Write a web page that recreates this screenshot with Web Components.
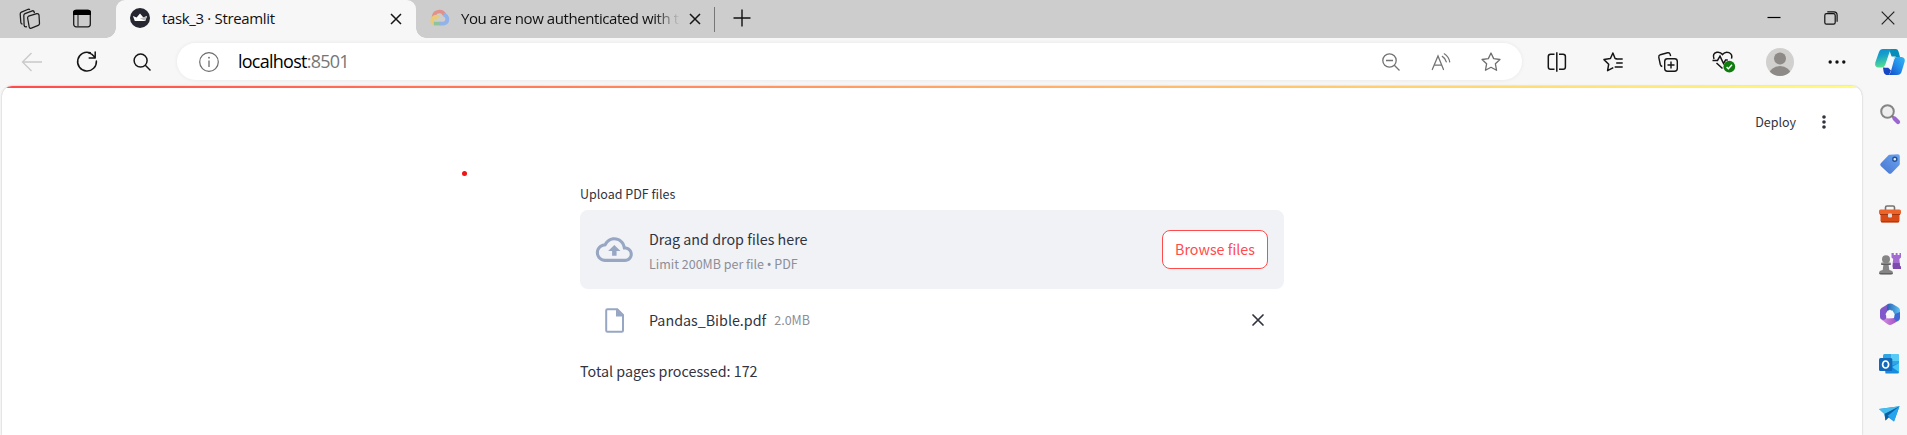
<!DOCTYPE html>
<html lang="en"><head><meta charset="utf-8"><title>task_3 · Streamlit</title>
<style>html,body{margin:0;height:100%;overflow:hidden;background:#f7f7f7}</style></head><body>
<browser-window></browser-window>
<script>
const icons = {
 spaces:[22,22,'<g fill="none" stroke="#1b1b1b" stroke-width="1.25" stroke-linejoin="round"><path d="M9.5 8.2l8.3-2.6q1.8-.3 2.2 1.4l.5 8.5q0 1.4-1.3 1.9l-6.8 2.8q-1.8.5-2.2-1.3L8.600 10q-.1-1.300.9-1.800z"/><path d="M8 18.600l-1.200.3q-1.500 0-1.700-1.500L4.800 7.500q0-1.300 1.200-1.800l7.300-2.900q1.500-.3 1.900 1.200l.2 1.200"/><path d="M3.500 16.300l-1-.6q-.7-.6-.7-1.500L1.200 6q0-1.300 1.200-1.800L9.200 1.300q1.100-.3 1.600.6"/></g>'],
 tabs:[20,20,'<rect x="1.700" y="1.500" width="16.600" height="16.300" rx="2.500" fill="none" stroke="#1b1b1b" stroke-width="1.300"/><path d="M1 6V3.500Q1 .8 3.800.8h12.400Q19 .8 19 3.500V6z" fill="#000"/><path d="M6 6v11.500" stroke="#333" stroke-width="1.200"/>'],
 crown:[20,20,'<circle cx="10" cy="10" r="10" fill="#262730"/><path d="M2.900 8.100l3.700 1.300L10 5.400l3.400 4 3.700-1.300-1.900 5H4.800z" fill="#fff"/><path d="M10 10.600l7.100-2.500-1.900 4.600z" fill="#bbb"/>'],
 cloud:[20,18,'<g fill="none" stroke-width="3.700"><path d="M3.500 8.500Q4 2.800 9.300 2.500q4-.1 5.300 3.600" stroke="#df918a"/><path d="M8.500 8.500q-3-1.700-5.300.5-2.200 3 .4 5.500" stroke="#e9cb78"/><path d="M3.800 14.600h6.600" stroke="#8fc49b"/><path d="M13.800 5.500q3.200 1.100 3.600 4.600 0 4-4 4.500h-3.700" stroke="#91b3ea"/></g>'],
 close:[12,12,'<path d="M1 1l10 10M11 1L1 11" stroke="#151515" stroke-width="1.500"/>'],
 plus:[18,18,'<path d="M9 .5v17M.5 9h17" stroke="#111" stroke-width="1.400"/>'],
 min:[14,14,'<path d="M.5 6.500h13" stroke="#000" stroke-width="1.200"/>'],
 max:[14,14,'<g fill="none" stroke="#111" stroke-width="1.200"><rect x=".8" y="2.700" width="10.400" height="10.400" rx="1.700"/><path d="M3.300.9h6.600q3.200 0 3.200 3.200v6.700"/></g>'],
 wclose:[14,14,'<path d="M.7.700l12.600 12.600M13.300.700L.7 13.300" stroke="#222" stroke-width="1.200"/>'],
 back:[22,20,'<path d="M21 10H1.500M10.500 1L1.500 10l9 9" fill="none" stroke="#c9c9c9" stroke-width="1.300"/>'],
 reload:[22,22,'<path d="M14.300 1.800A9.400 9.400 0 1 0 20.400 10M19.200 1v6h-6M19 6.800Q16.500 2.600 12 1.700" fill="none" stroke="#151515" stroke-width="1.500" stroke-linecap="round" stroke-linejoin="round"/>'],
 search:[18,18,'<circle cx="7.600" cy="7.600" r="6.500" fill="none" stroke="#151515" stroke-width="1.500"/><path d="M12.300 12.300l5.200 5.200" stroke="#151515" stroke-width="1.500"/>'],
 info:[20,20,'<circle cx="10" cy="10" r="9.300" fill="none" stroke="#6c6c6c" stroke-width="1.200"/><path d="M10 8.500V15" stroke="#6c6c6c" stroke-width="1.300"/><circle cx="10" cy="5.700" r=".9" fill="#6c6c6c"/>'],
 zoomout:[18,18,'<g fill="none" stroke="#737373" stroke-width="1.300"><circle cx="7.500" cy="7.500" r="6.700"/><path d="M12.300 12.300l5.200 5.200M4 7.500h7"/></g>'],
 read:[20,18,'<g fill="none" stroke="#737373" stroke-width="1.250" stroke-linecap="round"><path d="M1.300 16.500L7 3l5.500 13.500M3.200 12h7.600M11.300 3.400q3.200 2 4 5.500M13.300.8q4.500 2.900 5.400 8"/></g>'],
 star:[20,20,'<path d="M10 1l2.650 5.650 6.300.85-4.550 4.300 1.150 6.500L10 15.300l-5.550 3 1.150-6.500L1.050 7.500l6.300-.85z" fill="none" stroke="#6e6e6e" stroke-width="1.300" stroke-linejoin="round"/>'],
 split:[20,20,'<g fill="none" stroke="#151515" stroke-width="1.500"><path d="M7.500 2.300H3.600q-2.300 0-2.300 2.300v10.300q0 2.300 2.300 2.300h3.900M12 2.300h4.100q2.300 0 2.300 2.300v10.300q0 2.300-2.300 2.300H12M9.800.2v19.600"/></g>'],
 favs:[20,20,'<path d="M14 6.700l-1.900-.2L9.900 1 7.400 6.500 1 7.600l4.700 4.600-1.100 6.500 5.700-3M12.400 7h7.300M13.200 11h6.500M11.700 15h8" fill="none" stroke="#151515" stroke-width="1.500" stroke-linejoin="round"/>'],
 collections:[20,20,'<g fill="none" stroke="#151515" stroke-width="1.400"><rect x="6.700" y="6.700" width="12.600" height="12.600" rx="2.700"/><path d="M13 9.500v7M9.500 13h7M4.300 14.500q-1.500-.3-2-2L.8 5.300q-.3-2 1.500-2.600L9.600.8q2-.4 2.600 1.600l.4 1.800"/></g>'],
 heart:[24,22,'<path d="M2 8Q0 2.500 4.800 1.300q3.600-.7 5.700 2.200 2.700-3.400 6.500-1.900 3.800 1.700 2.500 6M.5 9.500h5l2.500-4.300 3.500 7.300 2.100-3.500h2.200M4.500 12l6 5.500" fill="none" stroke="#151515" stroke-width="1.500"/><circle cx="17.300" cy="15.700" r="5.900" fill="#107c10"/><path d="M14.600 15.900l1.800 1.800 3.600-3.900" fill="none" stroke="#fff" stroke-width="1.400"/>'],
 avatar:[28,28,'<defs><clipPath id="a"><circle cx="14" cy="14" r="14"/></clipPath></defs><g clip-path="url(#a)"><path d="M0 0h28v28H0z" fill="#d2d0ce"/><circle cx="14" cy="10.500" r="6" fill="#8d8a87"/><ellipse cx="14" cy="27.500" rx="11" ry="9.500" fill="#8d8a87"/></g>'],
 dots:[18,4,'<g fill="#111"><circle cx="2.200" cy="2" r="1.700"/><circle cx="9" cy="2" r="1.700"/><circle cx="15.800" cy="2" r="1.700"/></g>'],
 copilot:[30,28,'<defs><linearGradient id="a" x2=".2" y2="1"><stop stop-color="#1389ce"/><stop offset=".4" stop-color="#16a0cc"/><stop offset="1" stop-color="#55dc91"/></linearGradient><linearGradient id="b" x1="1" x2="0" y2="1"><stop stop-color="#31b8f5"/><stop offset=".5" stop-color="#208be8"/><stop offset="1" stop-color="#1648c8"/></linearGradient></defs><path d="M14 1h7q2 .2 2.700 3l1.300 5h-3q-3 0-4 2.500L16 7z" fill="#078dba"/><path d="M8 19.500h5l3 3-2 4.500h-2.500Q9 26.500 8.500 23z" fill="#1747c4"/><path d="M8 1h8.500q-1.500 1-2.300 4l-3.700 11q-1.200 3.500-4 3.500H3Q-.5 19 .3 14.500L4 4Q5 1 8 1z" fill="url(#a)"/><path d="M22 9h4.500q4 .5 3.200 4.500L26.500 24q-1 3-4.500 3h-8.500q1.700-1 2.500-4l3-11q1-3 3-3z" fill="url(#b)"/><path d="M17 8.500h4q-2 .8-2.700 3.200l-2 5.500q-1 2.300-3.300 2.300H9.200q1.500-.8 2.200-3l1.800-5.500q.8-2.500 3.800-2.500z" fill="#f4fafd"/>'],
 kebab:[4,14,'<g fill="#31333f"><circle cx="2" cy="2" r="1.800"/><circle cx="2" cy="7" r="1.800"/><circle cx="2" cy="12" r="1.800"/></g>'],
 ssearch:[20,20,'<circle cx="7.500" cy="7.500" r="6.300" fill="#eee" stroke="#858585" stroke-width="2"/><path d="M11.800 11.800l2.200 2.200" stroke="#777" stroke-width="2"/><path d="M14.500 14.500l3.500 3.500" stroke="#9b65d2" stroke-width="4.200" stroke-linecap="round"/>'],
 tag:[20,20,'<defs><linearGradient id="a" x1="1" x2="0" y2="1"><stop stop-color="#69a4f1"/><stop offset="1" stop-color="#4875d0"/></linearGradient></defs><path d="M9.600.7L17.800.2q2 0 2 2v7.500q0 1-.8 1.800l-7.500 7.700q-1.500 1.300-3 0L.8 12q-1.300-1.400 0-2.800L8 1.700q.7-.8 1.600-1z" fill="url(#a)"/><circle cx="14.800" cy="5.200" r="2" fill="#e8f1ff" stroke="#234f93" stroke-width="1.400"/>'],
 tools:[22,18,'<path d="M6.500 5V2.500q0-1.500 1.500-1.500h6q1.500 0 1.500 1.500V5" fill="none" stroke="#77716e" stroke-width="1.600"/><path d="M1.500 8h19v7.500q0 2-2 2h-15q-2 0-2-2z" fill="#d84b16"/><rect y="4.500" width="22" height="5" rx="1.500" fill="#ed642b"/><path d="M1 9.500h20M2 16.800h18" stroke="#a73610" stroke-width="1"/><rect x="9" y="8.500" width="4" height="4" rx="1" fill="#ddd"/>'],
 chess:[22,22,'<path d="M12.500 0h2.300v2h1.900V0h1.900v2h1.900V0h1.500v4.500l-1.600 1.500.5 6.500 1.100 1.500v2h-8l-.7-3 .9-7-1.700-1.500z" fill="#a36bd2"/><path d="M14 10h6.700l.2 2.500 1.100 1.500v2h-8z" fill="#7c4aad"/><g fill="#858585"><circle cx="7" cy="6.300" r="4"/><rect x="2" y="9.500" width="10" height="2.500" rx="1"/><path d="M4.500 11h5l.8 6q3.700.5 3.700 3 0 1.800-2 1.800H2Q0 21.800 0 20q0-2.500 3.700-3z"/></g><path d="M2.500 11.500h9M.5 20.500h13" stroke="#606060" stroke-width="1.100"/>'],
 m365:[20,22,'<defs><linearGradient id="a" x2="1"><stop stop-color="#244da9"/><stop offset="1" stop-color="#5bc5f4"/></linearGradient><linearGradient id="b" x1="1" x2="0"><stop stop-color="#9c4ac1"/><stop offset="1" stop-color="#d793e4"/></linearGradient></defs><path d="M6.500 2Q10-.5 13.500 1.500l5 3Q20 5.500 20 7.500v7.200Q20 17 18 18l-3.500-6.200L10 6.500 5 11z" fill="url(#a)"/><path d="M6.500 2L9 .8Q6.800 2 7 6l-.8 9-1 3-3.700-1.500Q0 15.500 0 14V7.500Q0 6 1.500 5z" fill="#8058c9"/><path d="M1.200 16.500Q4.500 18 6.300 15.200l9.200-.2 2.500 3-5.700 3.300q-2.300 1.400-4.600 0z" fill="url(#b)"/><path d="M20 9v5.500q0 2-2 3.500-3 .3-4-3l.7-4z" fill="#4067d8"/><path d="M7.700 7.500h4.800l2.200 3.800-2.200 3.900H7.700l-2.200-3.900z" fill="#f7f7f7"/>'],
 outlook:[21,20,'<rect x="4" width="16" height="14" rx="1.500" fill="#30a5e3"/><path d="M12 0h6.500Q20 0 20 1.500V7h-8z" fill="#57caf5"/><path d="M5 9l7 3 8-3v9q0 1.500-1.500 1.500h-12z" fill="#168be0"/><path d="M20 9v9l-7-5z" fill="#43c6f4"/><rect y="4" width="13.300" height="13" rx="1.500" fill="#1268ba"/><ellipse cx="6.600" cy="10.500" rx="3" ry="3.500" fill="none" stroke="#fff" stroke-width="1.700"/>'],
 plane:[21,16,'<path d="M0 3L20.500.3 15 15.500 9.500 11.500 6.500 14.500 5.500 8z" fill="#198de0"/><path d="M0 3L20.500.3 5.500 8z" fill="#47bded"/><path d="M5.500 8L20.500.3 9.500 11.500l-3 3z" fill="#0961a5"/><path d="M8.700 9.700L20.500.3 15 15.500z" fill="#24a4ef"/>'],
 upload:[36,36,'<path fill="#97a6c3" transform="scale(1.54) translate(-.1 -.6)" d="M19.350 10.040C18.670 6.590 15.640 4 12 4 9.110 4 6.600 5.640 5.350 8.040 2.340 8.360 0 10.910 0 14c0 3.310 2.690 6 6 6h13c2.760 0 5-2.240 5-5 0-2.640-2.050-4.780-4.650-4.960zM19 18H6c-2.210 0-4-1.790-4-4 0-2.050 1.530-3.760 3.560-3.970l1.070-.11.500-.95C8.080 7.140 9.940 6 12 6c2.620 0 4.880 1.860 5.390 4.430l.3 1.500 1.530.110c1.560.1 2.780 1.410 2.780 2.960 0 1.650-1.350 3-3 3zM8 13h2.550v3h2.900v-3H16l-4-4z"/>'],
 file:[20,25,'<path d="M3 1.200h9.300L18 7v15.500q0 1.300-1.300 1.300H2.500q-1.300 0-1.300-1.300v-20Q1.200 1.200 2.500 1.200z" fill="none" stroke="#97a6c3" stroke-width="2"/><path d="M11 .7V8.500h8z" fill="#97a6c3"/>'],
 remove:[12,12,'<path d="M1 1l10 10M11 1L1 11" stroke="#31333f" stroke-width="1.700" stroke-linecap="round"/>']
};
const define = (tag, css, html) => customElements.define(tag, class extends HTMLElement {
  constructor(){ super(); this.attachShadow({mode:'open'}).innerHTML =
    `<style>:host{box-sizing:border-box;display:flex;align-items:center}${css}</style>${html}`; }
});
/* ui-icon: a centred glyph in a cell whose width is set by the "w" attribute */
customElements.define('ui-icon', class extends HTMLElement {
  connectedCallback(){
    if(this.shadowRoot) return;
    const [w,h,body]=icons[this.getAttribute('name')], cell=this.getAttribute('w')||w;
    this.attachShadow({mode:'open'}).innerHTML=`<style>:host{display:flex;flex:none;align-items:center;justify-content:center;width:${cell}px}svg{display:block;flex:none;overflow:visible}</style><svg width="${w}" height="${h}" viewBox="0 0 ${w} ${h}">${body}</svg>`;
  }
});
define('browser-tab', `:host{height:38px;width:300px;padding:0 14px;font:15px "Open Sans",sans-serif;color:#111;flex:none;position:relative;padding-bottom:2px}
 :host([active]){background:#f7f7f7;border-radius:9px 9px 0 0}
 :host([active])::before,:host([active])::after{content:"";position:absolute;bottom:0;width:10px;height:10px}
 :host([active])::before{left:-10px;background:radial-gradient(circle at 0 0,transparent 9.500px,#f7f7f7 10px)}
 :host([active])::after{right:-10px;background:radial-gradient(circle at 100% 0,transparent 9.500px,#f7f7f7 10px)}
 .t{flex:1;margin:0 11px 0 12px;white-space:nowrap;overflow:hidden;letter-spacing:var(--ls,-.34px)}
 ui-icon[name=close]{margin-top:2px}
 :host(:not([active])) .t{margin-right:9px;margin-left:11px;-webkit-mask:linear-gradient(90deg,#000 88%,transparent);mask:linear-gradient(90deg,#000 88%,transparent)}`,
 `<slot name="icon"></slot><span class="t"><slot></slot></span><ui-icon name="close"></ui-icon>`);
define('tab-strip', `:host{height:38px;background:#cdcdcd;flex:none}.gap{flex:1}.lead{display:flex;width:116px;padding-left:3px;box-sizing:border-box;height:36px}.sep{width:1px;height:25px;background:#777}`,
 `<div class="lead"><ui-icon name="spaces" w="53"></ui-icon><ui-icon name="tabs" w="52"></ui-icon></div>
 <browser-tab active><ui-icon slot="icon" name="crown"></ui-icon>task_3 · Streamlit</browser-tab>
 <browser-tab style="width:298px;padding-right:13px;--ls:-.43px"><ui-icon slot="icon" name="cloud"></ui-icon>You are now authenticated with the gcloud</browser-tab>
 <div class="sep"></div><ui-icon name="plus" w="53" style="margin-top:-3px"></ui-icon><div class="gap"></div>
 <ui-icon name="min" w="57" style="margin-top:-2px"></ui-icon><ui-icon name="max" w="57" style="margin-top:-3px"></ui-icon><ui-icon name="wclose" w="57" style="margin:-3px -9px 0 0"></ui-icon>`);
define('address-bar', `:host{height:37px;width:1345px;flex:none;background:#fff;border-radius:19px;box-shadow:0 0 4px #0001;padding:0 6px 0 22px;font:18px "Open Sans",sans-serif;color:#000}
 .u{flex:1;margin-left:19px;white-space:nowrap;letter-spacing:-.75px;line-height:34px;padding-bottom:2px}i{font-style:normal;color:#767676}`,
 `<ui-icon name="info"></ui-icon><span class="u">localhost<i>:8501</i></span><ui-icon name="zoomout" w="51"></ui-icon><ui-icon name="read" w="50"></ui-icon><ui-icon name="star" w="50"></ui-icon>`);
define('tool-bar', `:host{height:48px;background:#f7f7f7;flex:none;padding:0 0 1px 4px}address-bar{margin:0 6px 0 8px}`,
 `<ui-icon name="back" w="56"></ui-icon><ui-icon name="reload" w="54"></ui-icon><ui-icon name="search" w="55"></ui-icon><address-bar></address-bar>
 <ui-icon name="split" w="57"></ui-icon><ui-icon name="favs" w="55"></ui-icon><ui-icon name="collections" w="55"></ui-icon><ui-icon name="heart" w="57"></ui-icon><ui-icon name="avatar" w="56"></ui-icon><ui-icon name="dots" w="58"></ui-icon><ui-icon name="copilot" w="48"></ui-icon>`);
define('side-bar', `:host{flex-direction:column;width:45px;padding:3px 0 0 10px;flex:none}ui-icon{height:50px}`,
 ['ssearch','tag','tools','chess','m365','outlook','plane'].map(n=>`<ui-icon name="${n}" w="34"></ui-icon>`).join(''));
define('file-dropzone', `:host{height:79px;background:#f0f2f6;border-radius:8px;padding:0 16px 0 15px}.t{flex:1;margin-left:16px;padding-top:2px;font-size:14.300px;line-height:21px}.s{font-size:12.500px;line-height:20px;color:#8c8e98;margin-top:5px}b{font:12.500px/1 "Noto Sans",sans-serif}
 button{width:106px;height:39px;padding:0 0 2px;border:1px solid #ff4b4b;border-radius:8px;background:#fff;color:#ff4b4b;font:14.300px "Noto Sans CJK SC",sans-serif}`,
 `<ui-icon name="upload" w="38"></ui-icon><div class="t"><div>Drag and drop files here</div><div class="s">Limit 200MB per file <b>•</b> PDF</div></div><button>Browse files</button>`);
define('uploaded-file', `:host{height:62px;padding:0 20px 0 25px;font-size:14.300px}.n,.s{padding-bottom:2px}.n{margin-left:24px}.s{flex:1;margin-left:8px;font-size:12.500px;color:#8c8e98}`,
 `<ui-icon name="file" w="20"></ui-icon><span class="n"><slot></slot></span><span class="s"><slot name="size"></slot></span><ui-icon name="remove"></ui-icon>`);
define('streamlit-app', `:host{display:block;position:relative;width:1860px;margin-left:2px;height:349px;background:#fff;border-radius:10px 10px 0 0;overflow:hidden;box-shadow:0 0 2px #0004;flex:none;font-family:"Noto Sans CJK SC",sans-serif;color:#31333f}
 .line{height:2px;background:linear-gradient(90deg,#ff4b4b,#fffd80)}
 header{display:flex;align-items:center;justify-content:flex-end;height:68px;padding-right:36px;gap:26px;font-size:12.500px}header span{padding-bottom:2px}
 main{width:704px;margin:0 auto;padding-top:28px}
 .l{font-size:12.500px;line-height:20px;margin-bottom:6px}.p{font-size:14.300px;line-height:22px;margin-top:9px}
 .dot{position:absolute;left:460px;top:85px;width:5px;height:5px;border-radius:50%;background:#f01414}`,
 `<div class="line"></div><header><span>Deploy</span><ui-icon name="kebab"></ui-icon></header><main><div class="l">Upload PDF files</div><file-dropzone></file-dropzone><uploaded-file>Pandas_Bible.pdf<span slot="size">2.0MB</span></uploaded-file><div class="p">Total pages processed: 172</div></main><div class="dot"></div>`);
define('browser-window', `:host{flex-direction:column;align-items:stretch;width:1907px;height:435px;background:#f7f7f7;overflow:hidden}.b{display:flex;height:349px}`,
 `<tab-strip></tab-strip><tool-bar></tool-bar><div class="b"><streamlit-app></streamlit-app><side-bar></side-bar></div>`);
</script></body></html>
